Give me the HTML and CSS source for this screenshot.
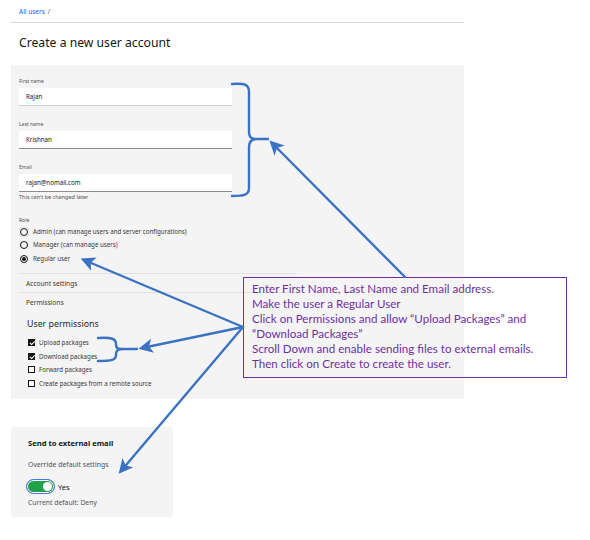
FILE: index.html
```html
<!DOCTYPE html>
<html>
<head>
<meta charset="utf-8">
<link rel="stylesheet" href="styles.css">
</head>
<body>
<div class="page">
  <div class="crumb"><a class="crumb-link">All users</a><span class="crumb-sep">/</span></div>
  <div class="rule"></div>
  <h1 class="title">Create a new user account</h1>

  <section class="panel">
    <div class="field">
      <label class="lbl">First name</label>
      <div class="input light">Rajan</div>
    </div>
    <div class="field">
      <label class="lbl">Last name</label>
      <div class="input">Krishnan</div>
    </div>
    <div class="field email">
      <label class="lbl">Email</label>
      <div class="input">rajan@nomail.com</div>
      <div class="helper">This can't be changed later</div>
    </div>

    <div class="role">
      <div class="lbl">Role</div>
      <div class="radio"><span class="circle"></span>Admin (can manage users and server configurations)</div>
      <div class="radio"><span class="circle"></span>Manager (can manage users)</div>
      <div class="radio"><span class="circle on"></span>Regular user</div>
    </div>

    <div class="tabs">
      <div class="tab">Account settings</div>
      <div class="tab">Permissions</div>
    </div>

    <h2 class="perm-title">User permissions</h2>
    <div class="checks">
      <div class="check"><span class="box on"></span>Upload packages</div>
      <div class="check"><span class="box on"></span>Download packages</div>
      <div class="check"><span class="box"></span>Forward packages</div>
      <div class="check"><span class="box"></span>Create packages from a remote source</div>
    </div>
  </section>

  <section class="panel2">
    <div class="p2-title">Send to external email</div>
    <div class="p2-sub">Override default settings</div>
    <div class="toggle-row"><span class="toggle"><span class="knob"></span></span><span class="yes">Yes</span></div>
    <div class="p2-note">Current default: Deny</div>
  </section>
</div>

<div class="note">
  <p>Enter First Name, Last Name and Email address.</p>
  <p>Make the user a Regular User</p>
  <p>Click on Permissions and allow “Upload Packages” and</p>
  <p>“Download Packages”</p>
  <p>Scroll Down and enable sending files to external emails.</p>
  <p>Then click on Create to create the user.</p>
</div>

<svg class="arrows" width="590" height="540" viewBox="0 0 590 540">
  <defs>
    <marker id="ah" markerWidth="6" markerHeight="6" refX="4.5" refY="3" orient="auto" markerUnits="strokeWidth">
      <path d="M0,0 L6,3 L0,6 L1.5,3 Z" fill="#3b73c2"/>
    </marker>
  </defs>
  <g fill="none" stroke="#3b73c2" stroke-width="2.4" stroke-linecap="round" stroke-linejoin="round">
    <path d="M232,84 C244,83 249,84 249,92 L249,132 C249,138 252,139 257,139 L268,139 M257,139 C252,139 249,141 249,147 L249,188 C249,195 244,196 232,196"/>
    <path d="M98,338 C112,337 116,339 116,344 C116,349 118,349 124,349 L137,349 M124,349 C118,349 116,350 116,355 C116,360 112,361 98,361"/>
    <line x1="405" y1="277" x2="272" y2="143" marker-end="url(#ah)"/>
    <line x1="243" y1="327" x2="84" y2="260" marker-end="url(#ah)"/>
    <line x1="243" y1="327" x2="142" y2="348" marker-end="url(#ah)"/>
    <line x1="243" y1="327" x2="121" y2="471" marker-end="url(#ah)"/>
  </g>
</svg>
</body>
</html>
```

FILE: styles.css
```css
* { box-sizing: border-box; margin: 0; padding: 0; }
html, body { background: #fff; }
body {
  width: 590px;
  height: 540px;
  position: relative;
  overflow: hidden;
  font-family: "Noto Sans", "Liberation Sans", sans-serif;
  color: #161616;
}
.page { display: flex; flex-direction: column; }

.crumb {
  padding: 7px 0 0 19px;
  height: 22px;
  font-size: 6.5px;
  line-height: 10px;
}
.crumb-link { color: #0f62fe; }
.crumb-sep { color: #525252; margin-left: 3px; }
.rule {
  margin-left: 11px;
  width: 453px;
  height: 1px;
  background: #d6d6d6;
}
.title {
  font-size: 12.2px;
  font-weight: 400;
  line-height: 16px;
  padding: 12px 0 0 19px;
  height: 42px;
  color: #161616;
}

.panel {
  margin-left: 11px;
  width: 453px;
  height: 334px;
  background: #f4f4f4;
  padding: 12px 0 0 8px;
}
.field { display: flex; flex-direction: column; margin-bottom: 14px; }
.lbl {
  font-size: 5px;
  line-height: 8px;
  color: #525252;
  height: 11px;
}
.input {
  width: 213px;
  height: 18px;
  background: #fff;
  border-bottom: 1px solid #8d8d8d;
  font-size: 6.2px;
  line-height: 17px;
  padding-left: 7px;
  color: #161616;
}
.input.light { border-bottom-color: #d0d0d0; }
.helper {
  font-size: 5.5px;
  line-height: 8px;
  color: #525252;
  margin-top: 1px;
}
.field.email { margin-bottom: 15px; }

.role { display: flex; flex-direction: column; }
.role .lbl { height: 9px; }
.radio {
  display: flex;
  align-items: center;
  height: 13px;
  font-size: 6.2px;
  color: #393939;
}
.radio:last-child { height: 15px; }
.circle {
  width: 8px;
  height: 8px;
  border: 1px solid #161616;
  border-radius: 50%;
  margin: 0 5px 0 1px;
  display: flex;
  align-items: center;
  justify-content: center;
}
.circle.on::after {
  content: "";
  width: 4px;
  height: 4px;
  border-radius: 50%;
  background: #161616;
}

.tabs {
  width: 278px;
  margin-top: 7px;
  border-top: 1px solid #e0e0e0;
}
.tab {
  height: 19px;
  padding-left: 7px;
  font-size: 6.6px;
  line-height: 19px;
  color: #393939;
  border-bottom: 1px solid #e0e0e0;
}
.tab:last-child { border-bottom: none; line-height: 20px; }

.perm-title {
  font-size: 8.8px;
  font-weight: 400;
  line-height: 12px;
  padding: 6px 0 0 8px;
  height: 24px;
  color: #262626;
}
.checks { display: flex; flex-direction: column; padding-left: 9px; }
.check {
  display: flex;
  align-items: center;
  height: 13.5px;
  font-size: 6.2px;
  color: #393939;
}
.box {
  width: 7px;
  height: 7px;
  border: 1px solid #161616;
  margin-right: 4px;
  position: relative;
  background: #fff;
}
.box.on { background: #161616; }
.box.on::after {
  content: "";
  position: absolute;
  left: 1.5px;
  top: 0px;
  width: 2px;
  height: 3.5px;
  border: solid #fff;
  border-width: 0 1px 1px 0;
  transform: rotate(45deg);
}

.panel2 {
  margin: 28px 0 0 11px;
  width: 162px;
  height: 90px;
  background: #f4f4f4;
  padding: 12px 0 0 17px;
  display: flex;
  flex-direction: column;
}
.p2-title { font-size: 7.6px; font-weight: 700; line-height: 9px; height: 21px; color: #161616; }
.p2-sub { font-size: 6.9px; line-height: 9px; color: #525252; height: 18px; }
.toggle-row { display: flex; align-items: center; height: 17px; margin-left: -2px; }
.toggle {
  width: 29px;
  height: 15px;
  border-radius: 8px;
  background: #24a148;
  border: 1.5px solid #4f6df2;
  box-shadow: inset 0 0 0 1px #fff;
  position: relative;
  display: flex;
  align-items: center;
  justify-content: flex-end;
  padding-right: 2.5px;
}
.knob { width: 9px; height: 9px; border-radius: 50%; background: #fff; }
.yes { font-size: 7.5px; margin-left: 3px; color: #161616; }
.p2-note { font-size: 6.8px; line-height: 9px; color: #525252; margin-top: 3px; }

.note {
  position: absolute;
  left: 243px;
  top: 277px;
  width: 324px;
  height: 101px;
  border: 1.3px solid #7030a0;
  padding: 3px 0 0 8px;
  font-family: "Lato", "Liberation Sans", sans-serif;
  font-size: 11.6px;
  line-height: 15px;
  color: #7030a0;
}
.arrows { position: absolute; left: 0; top: 0; pointer-events: none; }
```
